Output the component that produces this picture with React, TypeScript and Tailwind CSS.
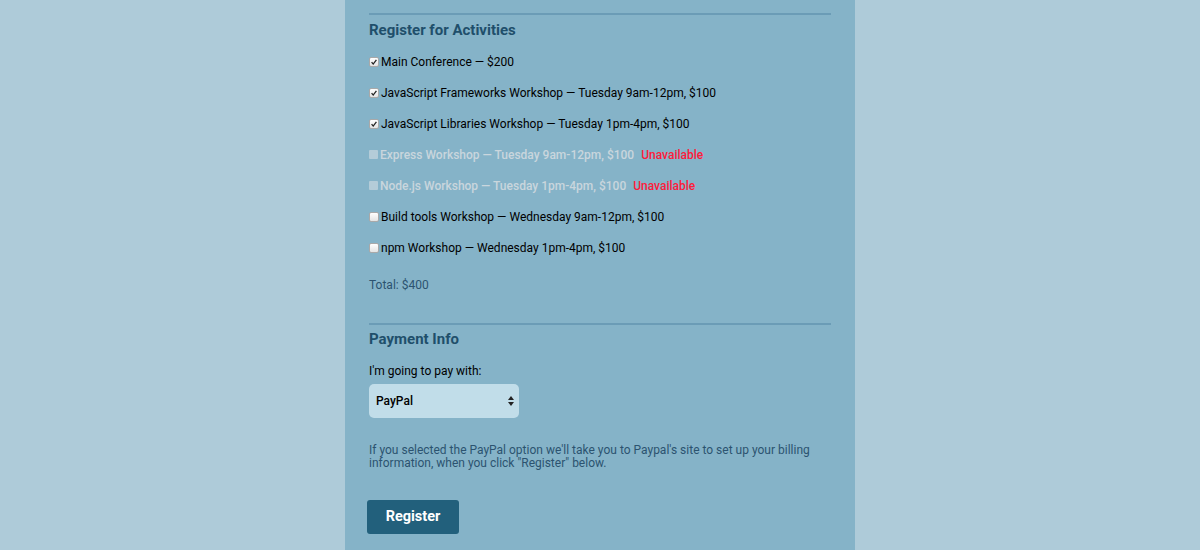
import React from 'react'

const activities = [
  { label: 'Main Conference — $200', checked: true },
  { label: 'JavaScript Frameworks Workshop — Tuesday 9am-12pm, $100', checked: true },
  { label: 'JavaScript Libraries Workshop — Tuesday 1pm-4pm, $100', checked: true },
  { label: 'Express Workshop — Tuesday 9am-12pm, $100', disabled: true },
  { label: 'Node.js Workshop — Tuesday 1pm-4pm, $100', disabled: true },
  { label: 'Build tools Workshop — Wednesday 9am-12pm, $100' },
  { label: 'npm Workshop — Wednesday 1pm-4pm, $100' },
]

function Box({ checked, disabled }: { checked?: boolean; disabled?: boolean }) {
  return (
    <span
      className={
        disabled
          ? 'inline-flex h-[9px] w-[9px] shrink-0 rounded-[1px] bg-[#b4ccd8]'
          : 'inline-flex h-[10px] w-[10px] shrink-0 items-center justify-center rounded-[2px] border border-[#a9a9a9] bg-gradient-to-b from-white to-[#e4e4e4]'
      }
    >
      {checked && (
        <svg viewBox="0 0 10 10" className="h-[8px] w-[8px]">
          <path d="M2 5.2 L4 7.6 L8 2.2" fill="none" stroke="#222" strokeWidth="1.6" />
        </svg>
      )}
    </span>
  )
}

export default function App() {
  return (
    <div className="min-h-[550px] bg-[#aecbd9] font-['Roboto',sans-serif]">
      <div className="mx-auto min-h-[550px] w-[510px] bg-[#85b3c8] px-6 pt-[13px]">
        <div className="border-t-2 border-[#6b9cb6]" />
        <h2 className="mt-[5px] text-[15px] font-bold leading-[20px] text-[#1f4f6b]">Register for Activities</h2>

        <div className="mt-[6px] flex flex-col">
          {activities.map((a) => (
            <label key={a.label} className="flex h-[31px] items-center gap-[2px] text-[12px]">
              <Box checked={a.checked} disabled={a.disabled} />
              <span className={a.disabled ? 'font-medium text-[#c9d6dd]' : 'text-black'}>{a.label}</span>
              {a.disabled && <span className="ml-[5px] font-medium text-[#ff1a3a]">Unavailable</span>}
            </label>
          ))}
        </div>

        <p className="mt-[14px] text-[12px] leading-[16px] text-[#2c5370]">Total: $400</p>

        <div className="mt-[30px] border-t-2 border-[#6b9cb6]" />
        <h2 className="mt-[4px] text-[15px] font-bold leading-[20px] text-[#1f4f6b]">Payment Info</h2>

        <p className="mt-[14px] text-[12px] leading-[16px] text-black">I'm going to pay with:</p>
        <div className="mt-[5px] flex h-[34px] w-[150px] items-center justify-between rounded-[5px] bg-[#c1dde9] pl-[7px] pr-[4px]">
          <span className="text-[12px] font-medium text-black">PayPal</span>
          <svg viewBox="0 0 8 12" className="h-[12px] w-[8px]">
            <path d="M4 1 L7 5 L1 5 Z" fill="#222" />
            <path d="M4 11 L7 7 L1 7 Z" fill="#222" />
          </svg>
        </div>

        <p className="mt-[26px] text-[12px] leading-[13px] text-[#2c5370]">
          If you selected the PayPal option we'll take you to Paypal's site to set up your billing information, when you click "Register" below.
        </p>

        <button className="-ml-[2px] mt-[30px] h-[34px] w-[92px] rounded-[3px] bg-[#22607c] text-[14.5px] font-bold text-white">
          Register
        </button>
      </div>
    </div>
  )
}
